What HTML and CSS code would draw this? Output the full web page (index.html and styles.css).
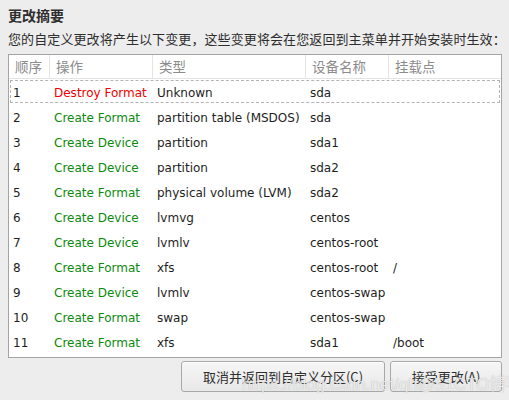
FILE: index.html
```html
<!DOCTYPE html>
<html lang="zh-CN">
<head>
<meta charset="utf-8">
<title>更改摘要</title>
<link rel="stylesheet" href="styles.css">
</head>
<body>
<div class="dialog">
  <h1 class="title">更改摘要</h1>
  <p class="subtitle">您的自定义更改将产生以下变更，这些变更将会在您返回到主菜单并开始安装时生效：</p>
  <div class="table">
    <div class="row head">
      <div class="cell">顺序</div>
      <div class="cell">操作</div>
      <div class="cell">类型</div>
      <div class="cell">设备名称</div>
      <div class="cell">挂载点</div>
    </div>
    <div class="body">
      <div class="row item focused"><div class="cell">1</div><div class="cell destroy">Destroy Format</div><div class="cell">Unknown</div><div class="cell">sda</div><div class="cell"></div></div>
      <div class="row item"><div class="cell">2</div><div class="cell create">Create Format</div><div class="cell">partition table (MSDOS)</div><div class="cell">sda</div><div class="cell"></div></div>
      <div class="row item"><div class="cell">3</div><div class="cell create">Create Device</div><div class="cell">partition</div><div class="cell">sda1</div><div class="cell"></div></div>
      <div class="row item"><div class="cell">4</div><div class="cell create">Create Device</div><div class="cell">partition</div><div class="cell">sda2</div><div class="cell"></div></div>
      <div class="row item"><div class="cell">5</div><div class="cell create">Create Format</div><div class="cell">physical volume (LVM)</div><div class="cell">sda2</div><div class="cell"></div></div>
      <div class="row item"><div class="cell">6</div><div class="cell create">Create Device</div><div class="cell">lvmvg</div><div class="cell">centos</div><div class="cell"></div></div>
      <div class="row item"><div class="cell">7</div><div class="cell create">Create Device</div><div class="cell">lvmlv</div><div class="cell">centos-root</div><div class="cell"></div></div>
      <div class="row item"><div class="cell">8</div><div class="cell create">Create Format</div><div class="cell">xfs</div><div class="cell">centos-root</div><div class="cell">/</div></div>
      <div class="row item"><div class="cell">9</div><div class="cell create">Create Device</div><div class="cell">lvmlv</div><div class="cell">centos-swap</div><div class="cell"></div></div>
      <div class="row item"><div class="cell">10</div><div class="cell create">Create Format</div><div class="cell">swap</div><div class="cell">centos-swap</div><div class="cell"></div></div>
      <div class="row item"><div class="cell">11</div><div class="cell create">Create Format</div><div class="cell">xfs</div><div class="cell">sda1</div><div class="cell">/boot</div></div>
    </div>
  </div>
  <div class="actions">
    <button class="btn btn-cancel">取消并返回到自定义分区(C)</button>
    <button class="btn btn-accept">接受更改(A)</button>
  </div>
  <div class="watermark">https://blog.csdn.net/qh@51CTO博客</div>
</div>
</body>
</html>
```
FILE: styles.css
```css
html, body {
  margin: 0;
  padding: 0;
  background: #ededed;
}
body {
  width: 509px;
  height: 400px;
  overflow: hidden;
  font-family: "DejaVu Sans", "Noto Sans CJK SC", sans-serif;
  color: #2e2e2e;
}
.dialog {
  position: relative;
  padding: 6px 7px 0 8px;
  height: 400px;
  box-sizing: border-box;
}
.title {
  margin: 0;
  font-family: "Noto Sans CJK SC", sans-serif;
  font-size: 14px;
  font-weight: bold;
  line-height: 18px;
  color: #2e2e2e;
}
.subtitle {
  margin: 6px 0 6px 0;
  font-family: "Noto Sans CJK SC", sans-serif;
  font-size: 13px;
  line-height: 18px;
  letter-spacing: 0.1px;
  color: #2e2e2e;
  white-space: nowrap;
}
.table {
  width: 494px;
  height: 304px;
  box-sizing: border-box;
  border: 1px solid #a4a4a4;
  background: #ffffff;
  overflow: hidden;
}
.row {
  display: grid;
  grid-template-columns: 41px 103px 153px 83px 1fr;
}
.head {
  height: 24px;
  box-sizing: border-box;
  border-bottom: 1px solid #e4e4e4;
}
.head .cell {
  font-family: "Noto Sans CJK SC", sans-serif;
  font-size: 13.5px;
  color: #8c8c8c;
  line-height: 23px;
  padding-left: 6px;
  border-right: 1px solid #e4e4e4;
}
.head .cell:last-child {
  border-right: none;
}
.item {
  height: 25px;
  align-items: center;
}
.item .cell {
  font-size: 12px;
  line-height: 16px;
  padding-left: 4px;
  padding-top: 2px;
  color: #1e1e1e;
  white-space: nowrap;
}
.item .destroy {
  color: #f00000;
}
.item .create {
  color: #0c8a0c;
}
.focused {
  outline: 1px dashed #b4b4b4;
  outline-offset: -2px;
}
.actions {
  display: flex;
  justify-content: flex-end;
  gap: 5px;
  margin-top: 3px;
}
.btn {
  height: 31px;
  box-sizing: border-box;
  border: 1px solid #a8a8a8;
  border-radius: 3px;
  background: linear-gradient(#f6f6f6, #e8e8e8);
  font-family: "Noto Sans CJK SC", sans-serif;
  font-size: 13px;
  color: #2e2e2e;
  padding: 0;
  white-space: nowrap;
  box-shadow: inset 0 1px 0 #ffffff;
}
.btn-cancel {
  width: 204px;
}
.btn-accept {
  width: 112px;
}
.watermark {
  position: absolute;
  left: 242px;
  top: 370px;
  font-family: "Liberation Sans", "Noto Sans CJK SC", sans-serif;
  font-size: 17px;
  color: rgba(255, 255, 255, 0.75);
  text-shadow: 0 0 1px rgba(120, 120, 120, 0.6);
  white-space: nowrap;
  pointer-events: none;
}
```
